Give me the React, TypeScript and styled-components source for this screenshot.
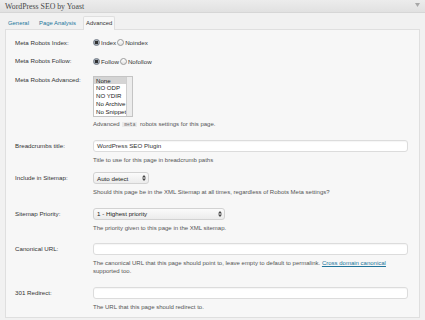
import React from "react";
import styled, { createGlobalStyle } from "styled-components";

const Global = createGlobalStyle`
  html, body { margin: 0; padding: 0; }
  body {
    background: #f1f1f1;
    font-family: "Liberation Sans", Arial, sans-serif;
    width: 425px;
    height: 320px;
    overflow: hidden;
  }
`;

const Page = styled.div`
  width: 425px;
  height: 320px;
  display: flex;
  flex-direction: column;
`;

const Header = styled.div`
  height: 13px;
  display: flex;
  align-items: center;
  justify-content: space-between;
  padding: 0 5px 0 5px;
  background: linear-gradient(#ececec, #e1e1e1);
  border-bottom: 1px solid #d6d6d6;
  box-sizing: border-box;
`;

const Title = styled.div`
  font-family: "Liberation Serif", "Times New Roman", serif;
  font-size: 7.8px;
  color: #464646;
  line-height: 13px;
`;

const Toggle = styled.svg`
  width: 5px;
  height: 4px;
  margin-top: -2px;
`;

const Body = styled.div`
  padding: 0 5px;
  display: flex;
  flex-direction: column;
`;

const Tabs = styled.div`
  display: flex;
  gap: 4px;
  margin-top: 3px;
  height: 13px;
  align-items: stretch;
`;

const Tab = styled.div<{ $active?: boolean }>`
  padding: 0 2px;
  font-size: 5.9px;
  line-height: 12px;
  color: ${(p) => (p.$active ? "#333" : "#21759b")};
  background: ${(p) => (p.$active ? "#f7f7f7" : "transparent")};
  border: 1px solid ${(p) => (p.$active ? "#dfdfdf" : "transparent")};
  border-bottom: none;
  margin-bottom: -1px;
  position: relative;
  z-index: 1;
  border-radius: 2px 2px 0 0;
`;

const Panel = styled.div`
  background: #f7f7f7;
  border: 1px solid #dfdfdf;
  padding: 8.5px 11px 5.5px 9px;
  display: flex;
  flex-direction: column;
`;

const Row = styled.div<{ $gap?: number }>`
  display: grid;
  grid-template-columns: 78px 1fr;
  align-items: start;
  margin-top: ${(p) => p.$gap ?? 10.5}px;
  &:first-child {
    margin-top: 0;
  }
`;

const Label = styled.div<{ $lh: number }>`
  font-size: 6.2px;
  color: #333;
  line-height: ${(p) => p.$lh}px;
  white-space: nowrap;
`;

const Field = styled.div`
  display: flex;
  flex-direction: column;
  align-items: flex-start;
`;

const RadioGroup = styled.div`
  display: flex;
  align-items: center;
  height: 8px;
  font-size: 6.2px;
  color: #333;
`;

const Radio = styled.span<{ $checked?: boolean }>`
  width: 7px;
  height: 7px;
  box-sizing: border-box;
  border-radius: 50%;
  border: 1px solid ${(p) => (p.$checked ? "#6f7884" : "#9a9a9a")};
  background: ${(p) =>
    p.$checked
      ? "radial-gradient(circle, #303030 0 1.5px, #a3acb6 1.8px)"
      : "linear-gradient(#ffffff, #e2e2e2)"};
  margin-right: 1px;
`;

const RadioText = styled.span`
  margin-right: 1px;
`;

const ListBox = styled.div`
  width: 40px;
  height: 41px;
  box-sizing: border-box;
  border: 1px solid #c4c4c4;
  background: #fff;
  display: flex;
  overflow: hidden;
`;

const Options = styled.div`
  flex: 1;
  overflow: hidden;
`;

const Option = styled.div<{ $selected?: boolean }>`
  font-size: 6.1px;
  line-height: 7.8px;
  height: 7.8px;
  padding-left: 2px;
  color: #222;
  white-space: nowrap;
  background: ${(p) => (p.$selected ? "#d4d4d4" : "transparent")};
`;

const ScrollTrack = styled.div`
  width: 5px;
  background: #ececec;
  border-left: 1px solid #cfcfcf;
`;

const Desc = styled.div<{ $mt?: number }>`
  font-size: 6px;
  line-height: 8.5px;
  color: #555;
  margin-top: ${(p) => p.$mt ?? 4}px;
  white-space: nowrap;
`;

const Code = styled.code`
  font-family: "Liberation Mono", "Courier New", monospace;
  font-size: 4.6px;
  background: #eaeaea;
  color: #666;
  padding: 0 2px;
  margin: 0 1px;
`;

const Link = styled.a`
  color: #21759b;
  text-decoration: underline;
`;

const TextInput = styled.div`
  width: 315px;
  height: 12px;
  box-sizing: border-box;
  background: #fff;
  border: 1px solid #dcdcdc;
  border-radius: 3px;
  box-shadow: inset 0 1px 1px rgba(0, 0, 0, 0.04);
  font-size: 6.2px;
  color: #333;
  line-height: 10px;
  padding-left: 3px;
`;

const Select = styled.div<{ $w: number }>`
  width: ${(p) => p.$w}px;
  height: 12px;
  box-sizing: border-box;
  background: linear-gradient(#fbfbfb, #ececec);
  border: 1px solid #d2d2d2;
  border-radius: 3px;
  display: flex;
  align-items: center;
  justify-content: space-between;
  padding: 0 2px 0 3px;
  font-size: 6.2px;
  color: #222;
`;

const Arrows = styled.svg`
  width: 4px;
  height: 6px;
`;

const SelectArrows = () => (
  <Arrows viewBox="0 0 4 6">
    <path d="M0 2.5 L2 0 L4 2.5 Z M0 3.5 L2 6 L4 3.5 Z" fill="#444" />
  </Arrows>
);

export default function App() {
  return (
    <Page>
      <Global />
      <Header>
        <Title>WordPress SEO by Yoast</Title>
        <Toggle viewBox="0 0 5 4">
          <path d="M0 0 L5 0 L2.5 4 Z" fill="#a8a8a8" />
        </Toggle>
      </Header>
      <Body>
        <Tabs>
          <Tab>General</Tab>
          <Tab>Page Analysis</Tab>
          <Tab $active>Advanced</Tab>
        </Tabs>
        <Panel>
          <Row>
            <Label $lh={8}>Meta Robots Index:</Label>
            <Field>
              <RadioGroup>
                <Radio $checked />
                <RadioText>Index</RadioText>
                <Radio />
                <RadioText>Noindex</RadioText>
              </RadioGroup>
            </Field>
          </Row>
          <Row>
            <Label $lh={8}>Meta Robots Follow:</Label>
            <Field>
              <RadioGroup>
                <Radio $checked />
                <RadioText>Follow</RadioText>
                <Radio />
                <RadioText>Nofollow</RadioText>
              </RadioGroup>
            </Field>
          </Row>
          <Row>
            <Label $lh={8}>Meta Robots Advanced:</Label>
            <Field>
              <ListBox>
                <Options>
                  <Option $selected>None</Option>
                  <Option>NO ODP</Option>
                  <Option>NO YDIR</Option>
                  <Option>No Archive</Option>
                  <Option>No Snippet</Option>
                </Options>
                <ScrollTrack />
              </ListBox>
              <Desc $mt={3}>
                Advanced <Code>meta</Code> robots settings for this page.
              </Desc>
            </Field>
          </Row>
          <Row>
            <Label $lh={12}>Breadcrumbs title:</Label>
            <Field>
              <TextInput>WordPress SEO Plugin</TextInput>
              <Desc>Title to use for this page in breadcrumb paths</Desc>
            </Field>
          </Row>
          <Row $gap={8}>
            <Label $lh={12}>Include in Sitemap:</Label>
            <Field>
              <Select $w={56}>
                <span>Auto detect</span>
                <SelectArrows />
              </Select>
              <Desc>
                Should this page be in the XML Sitemap at all times, regardless of Robots Meta settings?
              </Desc>
            </Field>
          </Row>
          <Row $gap={11}>
            <Label $lh={12}>Sitemap Priority:</Label>
            <Field>
              <Select $w={132}>
                <span>1 - Highest priority</span>
                <SelectArrows />
              </Select>
              <Desc>The priority given to this page in the XML sitemap.</Desc>
            </Field>
          </Row>
          <Row>
            <Label $lh={12}>Canonical URL:</Label>
            <Field>
              <TextInput />
              <Desc>
                The canonical URL that this page should point to, leave empty to default to permalink.{" "}
                <Link>Cross domain canonical</Link>
                <br />
                supported too.
              </Desc>
            </Field>
          </Row>
          <Row $gap={11.5}>
            <Label $lh={12}>301 Redirect:</Label>
            <Field>
              <TextInput />
              <Desc>The URL that this page should redirect to.</Desc>
            </Field>
          </Row>
        </Panel>
      </Body>
    </Page>
  );
}
